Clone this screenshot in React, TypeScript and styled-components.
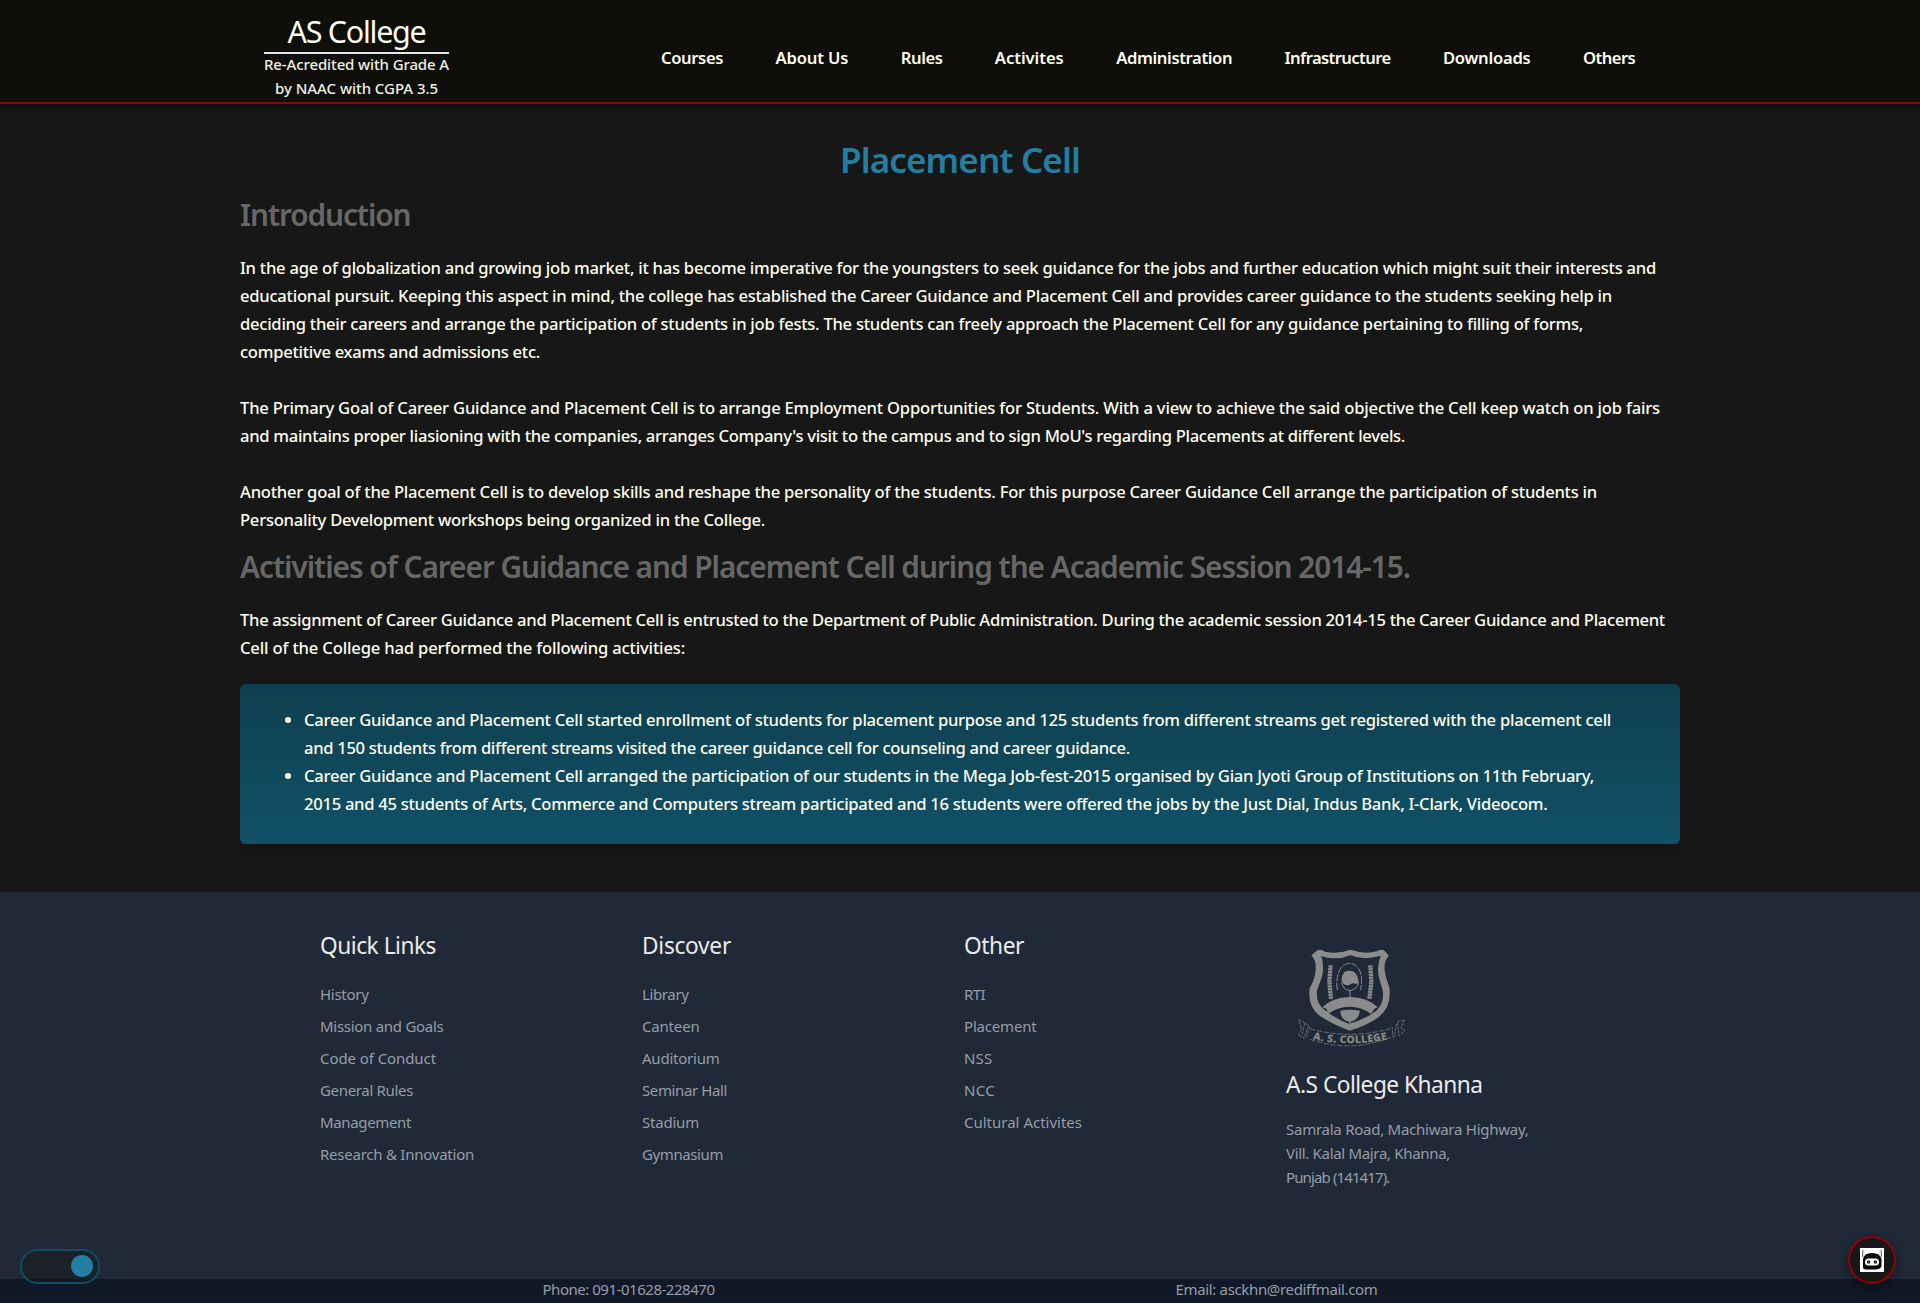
import React from 'react';
import styled, { createGlobalStyle } from 'styled-components';

const GlobalStyle = createGlobalStyle`
  *, *::before, *::after { box-sizing: border-box; }
  html { background: #fff; }
  body {
    margin: 0;
    overflow: hidden;
    font-family: "Noto Sans", "Open Sans", sans-serif;
    color: #fdfdee;
  }
  h1, h2, h3, p, ul { margin: 0; padding: 0; font-weight: inherit; }
  ul { list-style: none; }
  a { color: inherit; text-decoration: none; }
`;

const pen = document.createElement('canvas').getContext('2d')!;

const Line = styled.span`
  display: block;
  white-space: nowrap;
`;

interface FitProps {
  text: string;
  width: number;
  size: number;
  weight?: number;
}

/* Tracks a line of text so that it fills the given measure. */
function Fit({ text, width, size, weight = 400 }: FitProps) {
  pen.font = `${weight} ${size}px "Noto Sans"`;
  const spacing = (width - pen.measureText(text).width) / text.length;
  return <Line style={{ letterSpacing: `${spacing.toFixed(3)}px`, width }}>{text}</Line>;
}

const Page = styled.div`
  height: 1303px;
  background: #171717;
`;

const Header = styled.header`
  position: relative;
  display: flex;
  height: 104px;
  padding-left: 263px;
  background: #0f0e0a;
  border-bottom: 2px solid #960009;
  box-shadow: 0 4px 8px rgba(0, 0, 0, 0.4);
`;

const Brand = styled.a`
  display: flex;
  flex-direction: column;
  align-items: center;
  width: 185px;
  margin: 0 212px 0 1px;
  padding-top: 13px;
`;

const BrandName = styled.div`
  display: flex;
  justify-content: center;
  width: 100%;
  height: 41px;
  font-size: 30.5px;
  line-height: 37px;
  border-bottom: 2px solid #e5e7f0;
`;

const BrandNote = styled.div`
  display: flex;
  flex-direction: column;
  align-items: center;
  margin-top: -2px;
  font-size: 15px;
  font-weight: 500;
  line-height: 24px;
  color: #efefe4;
`;

const Nav = styled.nav`
  display: flex;
  gap: 52.4px;
  padding-top: 44px;
  font-size: 16.6px;
  font-weight: 600;
  line-height: 28px;
`;

const Main = styled.main`
  width: 1440px;
  margin: 0 auto;
  padding: 29px 0 48px;
`;

const Title = styled.h1`
  display: flex;
  justify-content: center;
  font-size: 35px;
  font-weight: 650;
  line-height: 54px;
  color: #227fa1;
`;

const SectionTitle = styled.h2<{ $top: number }>`
  margin-top: ${(p) => p.$top}px;
  font-size: 29.8px;
  font-weight: 650;
  line-height: 48px;
  color: #676767;
`;

const Prose = styled.div`
  display: flex;
  flex-direction: column;
  gap: 28px;
  margin-top: 15px;
  font-size: 16.6px;
  font-weight: 500;
  line-height: 28px;
`;

const Panel = styled.ul`
  margin-top: 22px;
  padding: 22px 64px 26px;
  border-radius: 6px;
  background: linear-gradient(#0e3f4f, #115167);
  box-shadow: 0 20px 25px -5px rgba(0, 0, 0, 0.08), 0 10px 10px -5px rgba(0, 0, 0, 0.04);
  font-size: 16.6px;
  font-weight: 500;
  line-height: 28px;
`;

const PanelItem = styled.li`
  position: relative;

  &::before {
    content: "";
    position: absolute;
    left: -19px;
    top: 11px;
    width: 6px;
    height: 6px;
    border-radius: 50%;
    background: #fdfdee;
  }
`;

const Footer = styled.footer`
  display: grid;
  grid-template-columns: repeat(4, 322px);
  height: 387px;
  padding: 38px 0 0 320px;
  background: #202937;
`;

const FooterTitle = styled.h3`
  font-size: 22.7px;
  line-height: 32px;
  color: #ebebe8;
`;

const Links = styled.ul`
  margin-top: 16px;
  font-size: 15px;
  line-height: 32px;
  color: #979ea8;
`;

const Address = styled.p`
  margin-top: 16px;
  font-size: 15px;
  line-height: 24px;
  color: #979ea8;
`;

const Crest = styled.svg`
  display: block;
  width: 120px;
  height: 115px;
  margin: 10px 0 14px 4px;
`;

const Contact = styled.div`
  display: flex;
  height: 24px;
  padding: 0 312px;
  justify-content: space-around;
  background: #111827;
  font-size: 15px;
  line-height: 20px;
  color: #979ea8;
`;

const Toggle = styled.button`
  position: fixed;
  left: 20px;
  bottom: 20px;
  display: flex;
  align-items: flex-start;
  justify-content: flex-end;
  width: 80px;
  height: 35px;
  padding: 4px 5px 0;
  border: 2px solid #0f4f64;
  border-radius: 18px;
  background: rgba(23, 23, 23, 0.5);
`;

const Knob = styled.span`
  width: 22px;
  height: 22px;
  border-radius: 50%;
  background: #227fa1;
`;

const Chat = styled.button`
  position: fixed;
  right: 24px;
  bottom: 20px;
  display: grid;
  place-items: center;
  width: 48px;
  height: 48px;
  padding: 0;
  border: 2px solid #8f0009;
  border-radius: 50%;
  background: #171717;
  box-shadow: 0 4px 12px rgba(0, 0, 0, 0.4);
`;

type Item = [string, number];

const nav: Item[] = [
  ['Courses', 62], ['About Us', 73], ['Rules', 41.6], ['Activites', 69],
  ['Administration', 116], ['Infrastructure', 106], ['Downloads', 87.6], ['Others', 52.3],
];

const intro: Item[][] = [
  [
    ['In the age of globalization and growing job market, it has become imperative for the youngsters to seek guidance for the jobs and further education which might suit their interests and', 1416],
    ['educational pursuit. Keeping this aspect in mind, the college has established the Career Guidance and Placement Cell and provides career guidance to the students seeking help in', 1372],
    ['deciding their careers and arrange the participation of students in job fests. The students can freely approach the Placement Cell for any guidance pertaining to filling of forms,', 1343],
    ['competitive exams and admissions etc.', 300],
  ],
  [
    ['The Primary Goal of Career Guidance and Placement Cell is to arrange Employment Opportunities for Students. With a view to achieve the said objective the Cell keep watch on job fairs', 1420],
    ["and maintains proper liasioning with the companies, arranges Company's visit to the campus and to sign MoU's regarding Placements at different levels.", 1165],
  ],
  [
    ['Another goal of the Placement Cell is to develop skills and reshape the personality of the students. For this purpose Career Guidance Cell arrange the participation of students in', 1357],
    ['Personality Development workshops being organized in the College.', 525],
  ],
];

const session: Item[][] = [
  [
    ['The assignment of Career Guidance and Placement Cell is entrusted to the Department of Public Administration. During the academic session 2014-15 the Career Guidance and Placement', 1425],
    ['Cell of the College had performed the following activities:', 445],
  ],
];

const activities: Item[][] = [
  [
    ['Career Guidance and Placement Cell started enrollment of students for placement purpose and 125 students from different streams get registered with the placement cell', 1307],
    ['and 150 students from different streams visited the career guidance cell for counseling and career guidance.', 826],
  ],
  [
    ['Career Guidance and Placement Cell arranged the participation of our students in the Mega Job-fest-2015 organised by Gian Jyoti Group of Institutions on 11th February,', 1290],
    ['2015 and 45 students of Arts, Commerce and Computers stream participated and 16 students were offered the jobs by the Just Dial, Indus Bank, I-Clark, Videocom.', 1243.5],
  ],
];

const columns: { title: Item; links: Item[] }[] = [
  {
    title: ['Quick Links', 116],
    links: [['History', 48.5], ['Mission and Goals', 123.5], ['Code of Conduct', 116], ['General Rules', 93], ['Management', 91], ['Research & Innovation', 154]],
  },
  {
    title: ['Discover', 89],
    links: [['Library', 46.5], ['Canteen', 57.5], ['Auditorium', 77.5], ['Seminar Hall', 85], ['Stadium', 57], ['Gymnasium', 81]],
  },
  {
    title: ['Other', 60],
    links: [['RTI', 21], ['Placement', 72.5], ['NSS', 28.5], ['NCC', 31], ['Cultural Activites', 118]],
  },
];

const address: Item[] = [
  ['Samrala Road, Machiwara Highway,', 242.5],
  ['Vill. Kalal Majra, Khanna,', 164],
  ['Punjab (141417).', 103.5],
];

function Paragraphs({ blocks }: { blocks: Item[][] }) {
  return (
    <Prose>
      {blocks.map((lines) => (
        <p key={lines[0][0]}>
          {lines.map(([t, w]) => <Fit key={t} text={t} width={w} size={16.6} weight={500} />)}
        </p>
      ))}
    </Prose>
  );
}

function CollegeCrest() {
  return (
    <Crest viewBox="0 0 360 345" fill="none" stroke="#8b8b8b">
      <path strokeWidth="4" fill="#8b8b8b" fillRule="evenodd" d="M84 32 Q94 30 104 37 Q145 45 182 31 Q224 46 260 36 Q272 29 280 32 L294 47 Q279 62 282 92 Q286 120 296 142 Q304 198 266 229 Q225 257 178 270 Q126 250 88 224 Q54 196 61 144 Q80 114 79 82 Q80 62 67 46 Z M91 45 Q102 78 94 110 L79 151 Q75 190 101 210 Q140 241 178 254 Q229 238 260 214 Q286 190 280 151 L268 110 Q262 75 275 44 Q224 62 182 43 Q138 62 91 45 Z" />
      <path strokeWidth="13" strokeDasharray="7 1.5" d="M122 76 L118 125 L123 178 M241 76 L244 125 L238 178" />
      <path strokeWidth="3" strokeDasharray="22 4" d="M142 150 C134 95 158 70 178 70 C202 70 222 95 212 150" />
      <path fill="#8b8b8b" stroke="none" d="M163 96 Q178 89 193 96 Q207 112 205 128 L199 133 Q188 126 177 136 Q163 137 156 126 Q152 111 163 96 Z" />
      <path strokeWidth="3" d="M155 126 Q158 149 180 152 Q202 148 206 126 M180 150 V174" />
      <path fill="#8b8b8b" stroke="none" d="M97 202 Q127 172 180 171 Q233 172 263 202 L252 207 L244 222 Q214 200 180 200 Q143 200 114 222 L110 207 Z M151 212 Q180 207 210 212 Q206 240 182 245 V261 H178 V245 Q151 240 151 212 Z" />
      <path strokeWidth="2" strokeDasharray="16 5" d="M60 266 Q178 300 300 266 M60 298 Q178 340 302 292" />
      <path strokeWidth="2" strokeDasharray="9 3" d="M26 238 L56 256 L42 295 L24 285 L35 268 Z M44 250 L36 287 M59 260 L49 294 M343 240 L322 245 L327 287 L345 272 L333 264 Z M306 260 L310 298 M319 252 L313 292" />
      <defs><path id="ribbon" d="M69 298 Q178 321 298 297" /></defs>
      <text fill="#8b8b8b" fontFamily="Noto Sans" fontSize="30" fontWeight="700">
        <textPath href="#ribbon" textLength="224" lengthAdjust="spacing">A. S. COLLEGE</textPath>
      </text>
    </Crest>
  );
}

function NinjaIcon() {
  return (
    <svg width="24" height="24" viewBox="0 0 24 24">
      <rect width="24" height="24" fill="#fff" />
      <path d="M2.7 2v7M21.3 2v7" stroke="#777" strokeWidth="1.2" />
      <path d="M3 20V11Q4 5 12 5T21.5 11V18Q21 21 16 21.5H8Q4 21.5 3 20Z" fill="#080808" />
      <rect x="5" y="10.5" width="14" height="7" rx="3.5" fill="#fff" />
      <circle cx="8.6" cy="14" r="1.7" fill="#111" />
      <circle cx="15.4" cy="14" r="1.7" fill="#111" />
      <circle cx="8.6" cy="14" r=".6" fill="#aaa" />
      <circle cx="15.4" cy="14" r=".6" fill="#aaa" />
    </svg>
  );
}

export default function App() {
  return (
    <>
      <GlobalStyle />
      <Page>
        <Header>
          <Brand href="#">
            <BrandName><Fit text="AS College" width={138} size={30.5} /></BrandName>
            <BrandNote>
              <Fit text="Re-Acredited with Grade A" width={185} size={15} weight={500} />
              <Fit text="by NAAC with CGPA 3.5" width={163} size={15} weight={500} />
            </BrandNote>
          </Brand>
          <Nav>
            {nav.map(([t, w]) => <a key={t} href="#"><Fit text={t} width={w} size={16.6} weight={600} /></a>)}
          </Nav>
        </Header>
        <Main>
          <Title><Fit text="Placement Cell" width={240} size={35} weight={650} /></Title>
          <SectionTitle $top={4}><Fit text="Introduction" width={170.5} size={29.8} weight={650} /></SectionTitle>
          <Paragraphs blocks={intro} />
          <SectionTitle $top={9}>
            <Fit text="Activities of Career Guidance and Placement Cell during the Academic Session 2014-15." width={1170} size={29.8} weight={650} />
          </SectionTitle>
          <Paragraphs blocks={session} />
          <Panel>
            {activities.map((lines) => (
              <PanelItem key={lines[0][0]}>
                {lines.map(([t, w]) => <Fit key={t} text={t} width={w} size={16.6} weight={500} />)}
              </PanelItem>
            ))}
          </Panel>
        </Main>
        <Footer>
          {columns.map(({ title, links }) => (
            <section key={title[0]}>
              <FooterTitle><Fit text={title[0]} width={title[1]} size={22.7} /></FooterTitle>
              <Links>
                {links.map(([t, w]) => <li key={t}><a href="#"><Fit text={t} width={w} size={15} /></a></li>)}
              </Links>
            </section>
          ))}
          <section>
            <CollegeCrest />
            <FooterTitle><Fit text="A.S College Khanna" width={196.5} size={22.7} /></FooterTitle>
            <Address>{address.map(([t, w]) => <Fit key={t} text={t} width={w} size={15} />)}</Address>
          </section>
        </Footer>
        <Contact>
          <Fit text="Phone: 091-01628-228470" width={172} size={15} />
          <Fit text="Email: asckhn@rediffmail.com" width={202} size={15} />
        </Contact>
      </Page>
      <Toggle aria-label="Dark mode"><Knob /></Toggle>
      <Chat aria-label="Chat"><NinjaIcon /></Chat>
    </>
  );
}
